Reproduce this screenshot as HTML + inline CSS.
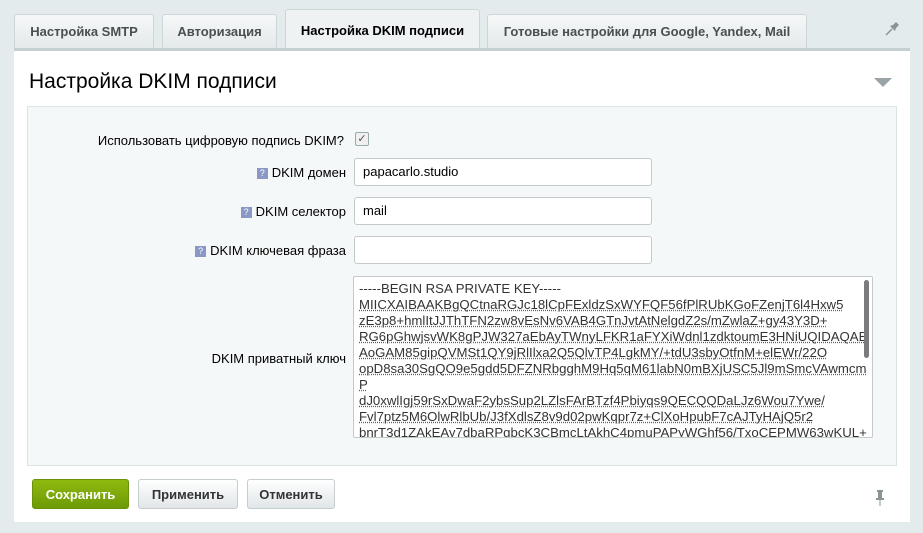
<!DOCTYPE html>
<html><head><meta charset="utf-8"><style>
body{margin:0;width:923px;height:533px;background:#e4ebed;font-family:"Liberation Sans",sans-serif;position:relative;overflow:hidden;font-size:13px;color:#000}
.tab{position:absolute;top:14px;height:34px;box-sizing:border-box;border:1px solid #cdd5d8;border-bottom:none;border-radius:3px 3px 0 0;background:linear-gradient(#f6f8f8,#e4e9ea);font-weight:bold;color:#4a4f52;font-size:13px;line-height:34px;text-align:center}
.tab.act{top:9px;height:40px;background:#eef2f3;color:#000;line-height:42px}
.panel{position:absolute;left:14px;top:48px;width:896px;height:474px;background:#fff;border-top:3px solid #c6d0d3;box-sizing:border-box}
h1{position:absolute;left:15px;top:19px;margin:0;font-weight:normal;font-size:21px;color:#000}
.tri{position:absolute;left:860px;top:27px;width:0;height:0;border-left:9px solid transparent;border-right:9px solid transparent;border-top:9px solid #9aa3a6}
.form{position:absolute;left:13px;top:55px;width:870px;height:360px;background:#f5f8f9;border:1px solid #dce3e5;box-sizing:border-box}
.lbl{position:absolute;right:550px;text-align:right;color:#000;font-size:13px;white-space:nowrap}
.q{display:inline-block;width:11px;height:11px;background:#8b97c6;color:#fff;font-size:9px;line-height:11px;text-align:center;margin-right:4px;vertical-align:1px}
.inp{position:absolute;left:326px;width:298px;height:28px;box-sizing:border-box;border:1px solid #c4cacc;border-radius:3px;background:#fff;padding-left:8px;line-height:26px;font-size:13px}
.ta{position:absolute;left:325px;top:169px;width:520px;height:162px;box-sizing:border-box;border:1px solid #c4cacc;border-radius:2px;background:#fff;overflow:hidden;padding:4px 0 0 5px;font-size:13.2px;line-height:16px;color:#333;white-space:nowrap}
.ta span{text-decoration:underline dotted #d03030}
.sb{position:absolute;right:3px;top:3px;width:5px;height:78px;background:#7b7b7b;border-radius:3px}
.btn{position:absolute;top:479px;height:30px;box-sizing:border-box;border-radius:3px;font-size:13px;line-height:30px;text-align:center;font-weight:bold}
.g{background:linear-gradient(#8fb90f,#6d9a07);color:#fff;border:1px solid #6a9209}
.w{background:linear-gradient(#fff,#e1e6e8);color:#333;border:1px solid #c6cdd0}
</style></head><body>
<div class="tab" style="left:14px;width:140px">Настройка SMTP</div>
<div class="tab" style="left:162px;width:115px">Авторизация</div>
<div class="tab act" style="left:285px;width:195px">Настройка DKIM подписи</div>
<div class="tab" style="left:487px;width:320px">Готовые настройки для Google, Yandex, Mail</div>
<svg style="position:absolute;left:884px;top:19px" width="18" height="18" viewBox="0 0 18 18"><path d="M2 16 L8 10" stroke="#8a9497" stroke-width="1.5"/><path d="M6 7 L11 12 L12 9 L15 6 L12 3 L9 6 Z" fill="#8a9497"/></svg>
<div class="panel">
<h1>Настройка DKIM подписи</h1>
<div class="tri"></div>
<div class="form">
<div class="lbl" style="top:26px;right:552px">Использовать цифровую подпись DKIM?</div>
<div style="position:absolute;left:327px;top:25px;width:12px;height:12px;border:1px solid #9aa;border-radius:2px;background:#f0f0f0;font-size:11px;line-height:12px;text-align:center;color:#555">✓</div>
<div class="lbl" style="top:58px"><span class="q">?</span>DKIM домен</div>
<div class="inp" style="top:51px">papacarlo.studio</div>
<div class="lbl" style="top:97px"><span class="q">?</span>DKIM селектор</div>
<div class="inp" style="top:90px">mail</div>
<div class="lbl" style="top:136px"><span class="q">?</span>DKIM ключевая фраза</div>
<div class="inp" style="top:129px"></div>
<div class="lbl" style="top:244px">DKIM приватный ключ</div>
<div class="ta">-----BEGIN RSA PRIVATE KEY-----<br><span>MIICXAIBAAKBgQCtnaRGJc18lCpFExldzSxWYFQF56fPlRUbKGoFZenjT6l4Hxw5</span><br><span>zE3p8+hmlItJJThTFN2zw8vEsNv6VAB4GTnJvtAtNelgdZ2s/mZwlaZ+gy43Y3D+</span><br><span>RG6pGhwjsvWK8gPJW327aEbAyTWnyLFKR1aFYXiWdnl1zdktoumE3HNiUQIDAQAB</span><br><span>AoGAM85gipQVMSt1QY9jRlIlxa2Q5QlvTP4LgkMY/+tdU3sbyOtfnM+elEWr/22O</span><br><span>opD8sa30SgQO9e5gdd5DFZNRbgghM9Hq5qM61labN0mBXjUSC5Jl9mSmcVAwmcm</span><br><span>P</span><br><span>dJ0xwlIgj59rSxDwaF2ybsSup2LZlsFArBTzf4Pbiyqs9QECQQDaLJz6Wou7Ywe/</span><br><span>Fvl7ptz5M6OlwRlbUb/J3fXdlsZ8v9d02pwKqpr7z+ClXoHpubF7cAJTyHAjQ5r2</span><br><span>bnrT3d1ZAkEAy7dbaRPgbcK3CBmcLtAkhC4pmuPAPyWGhf56/TxoCEPMW63wKUL+</span><br><span>bnrT3d1ZAkEAy7dbaRPgbcK3CBmcLtAkhC4pmuPAPyWGhf56</span><div class="sb"></div></div>
</div>
</div>
<div class="btn g" style="left:32px;width:97px">Сохранить</div>
<div class="btn w" style="left:138px;width:100px">Применить</div>
<div class="btn w" style="left:247px;width:88px">Отменить</div>
<svg style="position:absolute;left:873px;top:489px" width="14" height="18" viewBox="0 0 14 18"><rect x="4" y="1" width="6" height="2" fill="#8a9497"/><rect x="5" y="3" width="4" height="7" fill="#8a9497"/><rect x="3" y="9" width="8" height="2" fill="#8a9497"/><path d="M7 11 V17" stroke="#8a9497"/></svg>
</body></html>
